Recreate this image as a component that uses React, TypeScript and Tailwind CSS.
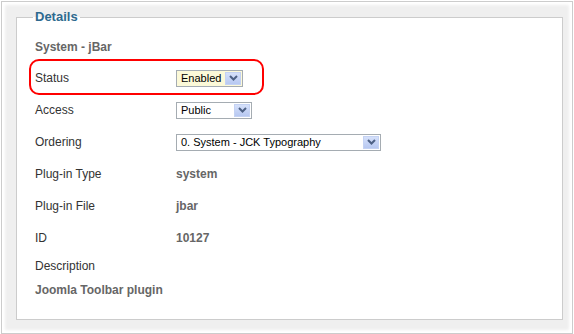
import React from 'react';

const Chevron: React.FC = () => (
    <svg width="9" height="6" viewBox="0 0 9 6">
        <path d="M1 1 L4.5 4.5 L8 1" fill="none" stroke="#4d6185" strokeWidth="2" />
    </svg>
);

const Select: React.FC<{ value: string; width: string; bg?: string }> = ({ value, width, bg = 'bg-white' }) => (
    <div className={`flex items-center h-[17px] border border-[#a5acb2] ${bg} ${width}`}>
        <span className="flex-1 pl-[4px] text-[11px] leading-none font-normal text-black truncate">{value}</span>
        <span className="flex items-center justify-center w-[16px] h-[13px] mr-[1px] bg-gradient-to-b from-[#d5e0fa] to-[#b7c8f1] border border-[#c4d2f3]">
            <Chevron />
        </span>
    </div>
);

const Row: React.FC<{ label: string; h?: string; children?: React.ReactNode }> = ({ label, h = 'h-[32px]', children }) => (
    <div className={`flex items-center ${h}`}>
        <div className="w-[141px] text-[12px] text-[#333]">{label}</div>
        <div className="text-[12px] font-bold text-[#666]">{children}</div>
    </div>
);

export default function App() {
    return (
        <div
            className="m-[1px] w-[572px] h-[333px] border border-[#cccccc] bg-[#efefef] shadow-[inset_0_0_3px_3px_#ffffff] pl-[14px] pr-[9px] pt-[7px] pb-[13px]"
            style={{ fontFamily: '"Liberation Sans", Arial, sans-serif' }}
        >
            <fieldset className="relative h-full border border-[#cccccc] bg-white pl-[18px] pr-4 pb-4">
                <legend className="ml-[-2px] px-[2px] text-[13px] leading-[16px] font-bold text-[#2e6a8f]">Details</legend>

                <div className="mt-[7px] flex items-center h-[30px] text-[12px] font-bold text-[#666]">System - jBar</div>

                <Row label="Status">
                    <Select value="Enabled" width="w-[67px]" bg="bg-[#fcf9d8]" />
                </Row>
                <Row label="Access">
                    <Select value="Public" width="w-[76px]" />
                </Row>
                <Row label="Ordering">
                    <Select value="0. System - JCK Typography" width="w-[205px]" />
                </Row>
                <Row label="Plug-in Type">system</Row>
                <Row label="Plug-in File">jbar</Row>
                <Row label="ID">10127</Row>
                <Row label="Description" h="h-[24px]" />
                <div className="flex items-center h-[24px] text-[12px] font-bold text-[#666]">Joomla Toolbar plugin</div>

                {/* red highlight round the status row */}
                <div className="absolute left-[12px] top-[34px] w-[235px] h-[36px] border-2 border-[#ff0000] rounded-[10px] pointer-events-none" />
            </fieldset>
        </div>
    );
}
